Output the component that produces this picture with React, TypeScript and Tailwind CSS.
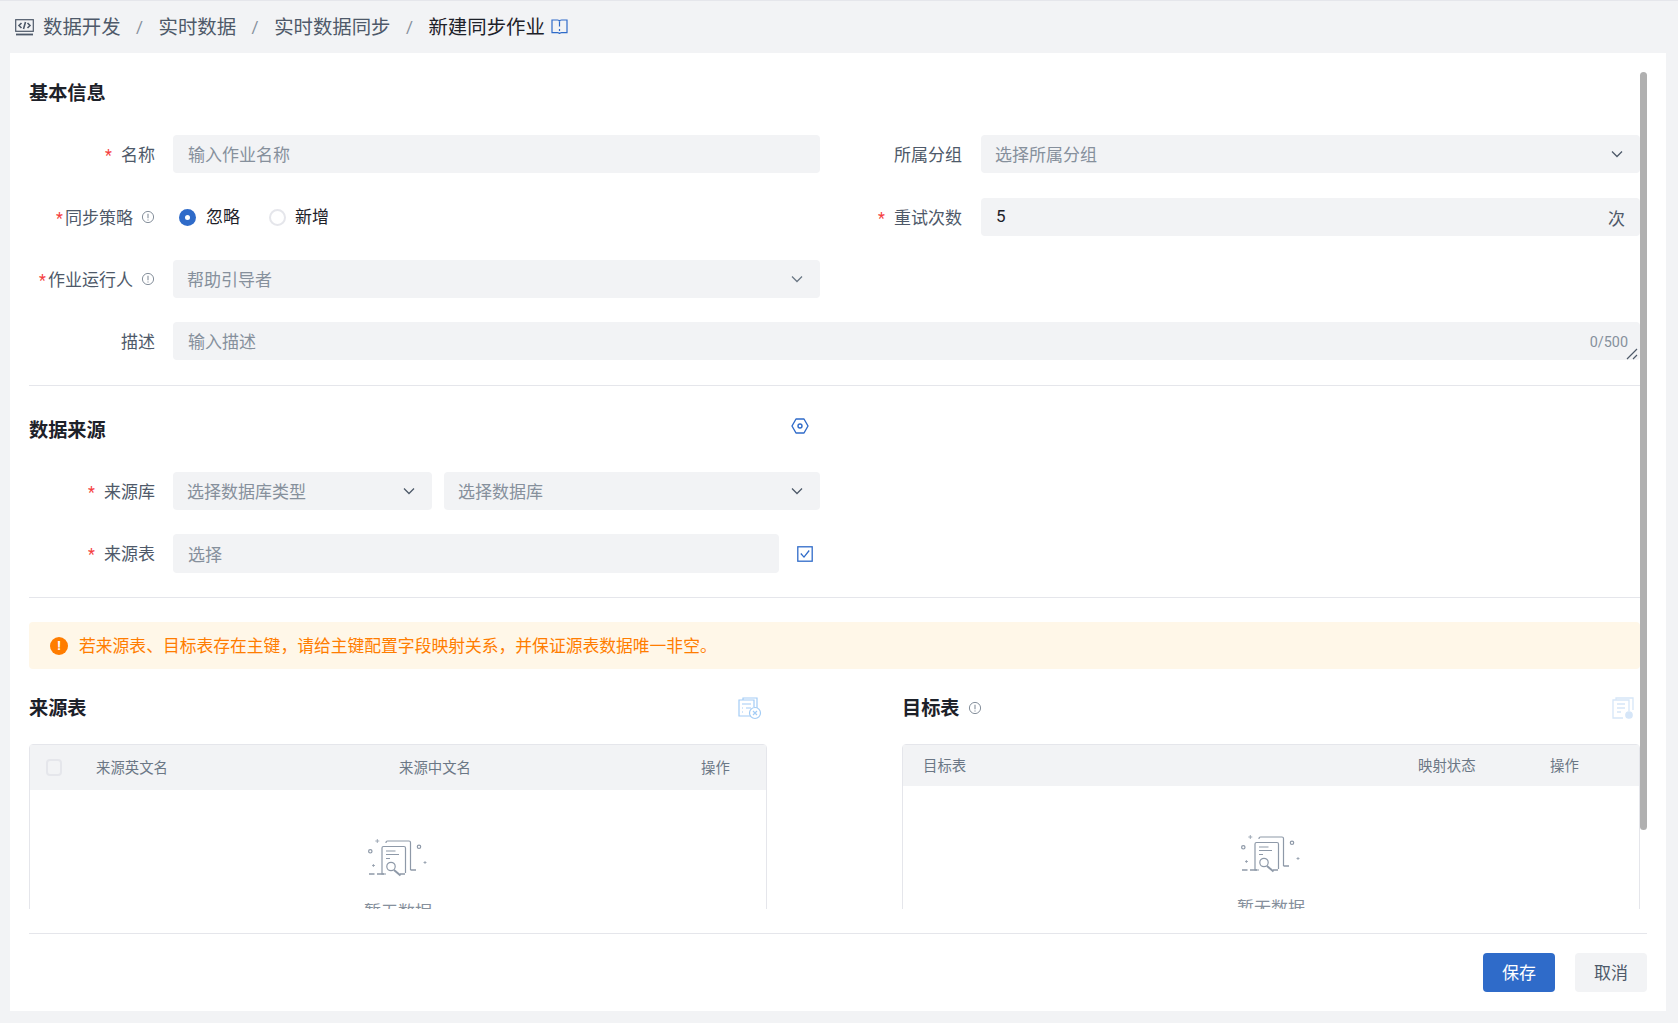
import React from "react";

type IconProps = { className?: string };

const InfoIcon = ({ className = "" }: IconProps) => (
  <svg viewBox="0 0 14 14" fill="none" stroke="currentColor" className={className}>
    <circle cx="7" cy="7" r="5.6" strokeWidth="1" />
    <path d="M7 3.8v4.4" strokeWidth="1.1" />
    <path d="M7 9.4v1" strokeWidth="1.1" />
  </svg>
);

const Chevron = ({ className = "" }: IconProps) => (
  <svg viewBox="0 0 12 8" fill="none" stroke="currentColor" strokeWidth="1.3" className={className}>
    <path d="M1 1.5l5 5 5-5" />
  </svg>
);

const MonitorIcon = () => (
  <svg viewBox="0 0 19 17" fill="none" className="w-[19px] h-[17px] text-[#4e5969]" stroke="currentColor">
    <rect x="0.7" y="0.7" width="17.6" height="11.6" strokeWidth="1.2" />
    <path d="M6.5 4L4 6.5 6.5 9M12.5 4L15 6.5 12.5 9M10.5 3L8.5 10" strokeWidth="1.6" />
    <path d="M1 15.5h17" strokeWidth="1.8" />
  </svg>
);

const BookIcon = () => (
  <svg viewBox="0 0 17 16" fill="none" stroke="#2f6bc9" strokeWidth="1.2" className="w-[17px] h-[16px]">
    <path d="M1 1h5.5c1 0 2 .4 2 1.4 0-1 1-1.4 2-1.4H16v12.6h-5.5c-1 0-2 .4-2 1.4 0-1-1-1.4-2-1.4H1z" />
    <path d="M8.5 2.4v5.2M8.5 10v2" />
  </svg>
);

const HexIcon = () => (
  <svg viewBox="0 0 18 18" fill="none" stroke="#2f6bc9" strokeWidth="1.4" className="w-[18px] h-[18px]">
    <path d="M5 2h8l4 7-4 7H5L1 9z" strokeLinejoin="round" />
    <circle cx="9" cy="9" r="2" />
  </svg>
);

const CheckIcon = () => (
  <svg viewBox="0 0 16 16" fill="none" stroke="#2f6bc9" strokeWidth="1.3" className="w-[16px] h-[16px]">
    <rect x="0.8" y="0.8" width="14.4" height="14.4" />
    <path d="M3.8 7.5l3.2 3.6 5.2-6.6" />
  </svg>
);

const RemoveFileIcon = () => (
  <svg viewBox="0 0 24 23" fill="none" stroke="#a3ccf5" strokeWidth="1.2" className="w-[24px] h-[23px] mt-[2px]">
    <path d="M5 3V1h14v10" />
    <path d="M13 19H1V3h15v7" />
    <path d="M4 7h9M4 11h1M8 11h5M4 15h1" />
    <circle cx="17" cy="16" r="5.5" />
    <path d="M15 14l4 4M19 14l-4 4" />
  </svg>
);

const AddFileIcon = () => (
  <svg viewBox="0 0 22 23" fill="none" stroke="#d6e6f8" strokeWidth="1.3" className="w-[22px] h-[23px] mt-[2px]">
    <path d="M4 3V1h17v12" />
    <path d="M11 21H1V3h16v11" />
    <path d="M5 7h8M5 11h8M5 15h4" />
    <circle cx="17" cy="18" r="3.2" fill="#d6e6f8" />
  </svg>
);

const EmptyImage = () => (
  <svg viewBox="28 28 60 40" fill="none" stroke="#8e99a8" strokeWidth="1.2" className="w-[60px] h-[40px]">
    <path d="M46 33v-.5a1.5 1.5 0 0 1 1.5-1.5H69a1.5 1.5 0 0 1 1.5 1.5V60" />
    <path d="M46 64H42V38a1.5 1.5 0 0 1 1.5-1.5H64a1.5 1.5 0 0 1 1.5 1.5v25" />
    <path d="M46 41h9.5M46 44.5h13M46 48.5h4" />
    <circle cx="51" cy="56.5" r="4.2" />
    <path d="M54 60l6.5 5.5" strokeWidth="2" />
    <path d="M29 64h5.5M37 64h7M60 64h5M70.5 60H76" strokeWidth="1.3" />
    <circle cx="30.3" cy="41.3" r="1.7" />
    <circle cx="79" cy="36.8" r="1.7" />
    <path d="M37.3 29v4M35.3 31h4M33.4 54v3M32 55.5h3M85 51v3M83.5 52.5h3" strokeWidth=".8" />
  </svg>
);

const Field = ({
  label,
  required,
  info,
  children,
  wide,
  className = "",
}: {
  label: string;
  required?: boolean;
  info?: boolean;
  children: React.ReactNode;
  wide?: boolean;
  className?: string;
}) => (
  <div className={`flex items-center ${className}`}>
    <div
      className={`flex items-center justify-end shrink-0 text-[17px] text-[#4e5969] ${
        wide ? "w-[142px] mr-[19px]" : "w-[126px] mr-[18px]"
      }`}
    >
      {required && <span className={`text-[#f53f3f] text-[16px] pt-[3px] ${info ? "mr-[2px]" : "mr-[9px]"}`}>*</span>}
      <span className="pt-[3px]">{label}</span>
      {info && <InfoIcon className="w-[14px] h-[14px] ml-[8px] text-[#86909c]" />}
    </div>
    <div className="flex-1 min-w-0">{children}</div>
  </div>
);

const TextBox = ({ placeholder, tall }: { placeholder: string; tall?: boolean }) => (
  <input
    placeholder={placeholder}
    className={`w-full rounded bg-[#f2f3f5] px-[15px] pt-[2px] text-[17px] text-[#1d2129] outline-none placeholder:text-[#86909c] ${
      tall ? "h-[39px]" : "h-[38px]"
    }`}
  />
);

const SelectBox = ({ text, dark }: { text: string; dark?: boolean }) => (
  <div className="flex items-center justify-between h-[38px] rounded bg-[#f2f3f5] pl-[14px] pr-[17px]">
    <span className="pt-[3px] text-[17px] text-[#86909c]">{text}</span>
    <Chevron className={`w-[12px] h-[8px] ${dark ? "text-[#4e5969]" : "text-[#6b7785]"}`} />
  </div>
);

const SectionTitle = ({ children }: { children: React.ReactNode }) => (
  <h2 className="h-[26px] text-[19.2px] leading-[30px] font-bold text-[#1d2129]">{children}</h2>
);

const Crumb = ({ text, current }: { text: string; current?: boolean }) => (
  <span className={`pt-[2px] text-[19.4px] ${current ? "text-[#1d2129]" : "text-[#4e5969]"}`}>{text}</span>
);

const Sep = () => <span className="pt-[2px] text-[17px] text-[#86909c] w-[38px] text-center">/</span>;

const Empty = () => (
  <div className="flex flex-col items-center mt-[48px]">
    <EmptyImage />
    <div className="mt-[22px] text-[17px] leading-[24px] text-[#86909c]">暂无数据</div>
  </div>
);

const App = () => {
  return (
    <div className="w-[1678px] h-[1023px] overflow-hidden bg-[#f2f3f5] border-t border-[#e5e6eb] font-['Roboto','Noto_Sans_CJK_SC',sans-serif]">
      {/* 面包屑 */}
      <div className="flex items-center h-[52px] pl-[15px]">
        <MonitorIcon />
        <span className="w-[9px]" />
        <Crumb text="数据开发" />
        <Sep />
        <Crumb text="实时数据" />
        <Sep />
        <Crumb text="实时数据同步" />
        <Sep />
        <Crumb text="新建同步作业" current />
        <span className="ml-[6px]">
          <BookIcon />
        </span>
      </div>

      <div className="relative ml-[10px] w-[1656px] h-[958px] bg-white">
        {/* 滚动条 */}
        <div className="absolute left-[1630px] top-[19px] w-[7px] h-[758px] rounded-full bg-[#b0b0b0] z-10" />

        <div className="h-[856px] overflow-hidden pl-[19px] pr-[26px] pt-[26px]">
          {/* 基本信息 */}
          <SectionTitle>基本信息</SectionTitle>
          <div className="grid grid-cols-[791px_820px] mt-[30px]">
            <Field label="名称" required>
              <TextBox placeholder="输入作业名称" />
            </Field>
            <Field label="所属分组" wide>
              <SelectBox text="选择所属分组" dark />
            </Field>
          </div>
          <div className="grid grid-cols-[791px_820px] mt-[25px]">
            <Field label="同步策略" required info>
              <div className="flex items-center h-[38px] pl-[6px] text-[17px] text-[#1d2129]">
                <span className="flex items-center justify-center w-[17px] h-[17px] rounded-full bg-[#2f6bc9]">
                  <span className="w-[5px] h-[5px] rounded-full bg-white" />
                </span>
                <span className="ml-[10px] pt-[2px]">忽略</span>
                <span className="ml-[29px] w-[17px] h-[17px] rounded-full border-2 border-[#e5e6eb]" />
                <span className="ml-[9px] pt-[2px]">新增</span>
              </div>
            </Field>
            <Field label="重试次数" required wide>
              <div className="flex items-center justify-between h-[38px] rounded bg-[#f2f3f5] pl-[15px] pr-[15px] text-[17px]">
                <span className="text-[#1d2129]">5</span>
                <span className="pt-[5px] text-[#4e5969]">次</span>
              </div>
            </Field>
          </div>
          <div className="w-[791px] mt-[24px]">
            <Field label="作业运行人" required info>
              <SelectBox text="帮助引导者" />
            </Field>
          </div>
          <Field label="描述" className="mt-[24px]">
            <div className="relative">
              <TextBox placeholder="输入描述" />
              <span className="absolute right-[12px] top-[11px] text-[14.4px] leading-[20px] text-[#86909c]">0/500</span>
              <svg viewBox="0 0 12 12" stroke="#4e5969" strokeWidth="1.2" className="absolute right-[2px] bottom-0 w-[12px] h-[12px]">
                <path d="M1 11L11 1M7 11l4-4" />
              </svg>
            </div>
          </Field>

          <div className="h-px bg-[#e5e6eb] mt-[25px]" />

          {/* 数据来源 */}
          <div className="flex items-start justify-between w-[791px] mt-[30px]">
            <SectionTitle>数据来源</SectionTitle>
            <span className="mt-[1px] mr-[11px]">
              <HexIcon />
            </span>
          </div>
          <div className="w-[791px] mt-[30px]">
            <Field label="来源库" required>
              <div className="grid grid-cols-[259px_1fr] gap-[12px]">
                <SelectBox text="选择数据库类型" dark />
                <SelectBox text="选择数据库" dark />
              </div>
            </Field>
          </div>
          <div className="w-[791px] mt-[24px]">
            <Field label="来源表" required>
              <div className="flex items-center gap-[18px] pr-[7px]">
                <TextBox placeholder="选择" tall />
                <span className="shrink-0 pt-[1px]">
                  <CheckIcon />
                </span>
              </div>
            </Field>
          </div>

          <div className="h-px bg-[#e5e6eb] mt-[24px]" />

          {/* 提示 */}
          <div className="flex items-center h-[47px] mt-[24px] pl-[21px] rounded bg-[#fff7e8] text-[16.8px] text-[#ff7d00]">
            <span className="flex items-center justify-center w-[18px] h-[18px] rounded-full bg-[#ff7d00] text-[13px] font-bold text-white">!</span>
            <span className="ml-[11px] pt-[3px]">若来源表、目标表存在主键，请给主键配置字段映射关系，并保证源表数据唯一非空。</span>
          </div>

          {/* 字段映射 */}
          <div className="grid grid-cols-[738px_738px] gap-x-[135px] mt-[25px]">
            <div>
              <div className="flex items-center justify-between pr-[5px]">
                <SectionTitle>来源表</SectionTitle>
                <RemoveFileIcon />
              </div>
              <div className="mt-[24px] h-[300px] rounded-t border border-[#e5e6eb]">
                <div className="grid grid-cols-[66px_303px_302px_1fr] items-center h-[45px] bg-[#f2f3f5] text-[14.4px] text-[#6b7785]">
                  <span className="ml-[16px] w-[16px] h-[17px] rounded border-2 border-[#e5e6eb]" />
                  <span className="pt-[2px]">来源英文名</span>
                  <span className="pt-[2px]">来源中文名</span>
                  <span className="pt-[2px]">操作</span>
                </div>
                <Empty />
              </div>
            </div>
            <div>
              <div className="flex items-center justify-between pr-[6px]">
                <div className="flex items-center">
                  <SectionTitle>目标表</SectionTitle>
                  <InfoIcon className="w-[14px] h-[14px] ml-[8px] mt-[2px] text-[#86909c]" />
                </div>
                <AddFileIcon />
              </div>
              <div className="mt-[24px] h-[300px] rounded-t border border-[#e5e6eb]">
                <div className="grid grid-cols-[1fr_132px_89px] items-center h-[41px] pl-[20px] bg-[#f2f3f5] text-[14.4px] text-[#6b7785]">
                  <span className="pt-[2px]">目标表</span>
                  <span className="pt-[2px]">映射状态</span>
                  <span className="pt-[2px]">操作</span>
                </div>
                <Empty />
              </div>
            </div>
          </div>
        </div>

        {/* 底部按钮 */}
        <div className="mx-[19px] mt-[24px] border-t border-[#e5e6eb]">
          <div className="flex justify-end gap-[20px] mt-[19px]">
            <button className="w-[72px] h-[39px] rounded bg-[#2f6bc9] pt-[2px] text-[17px] text-white">保存</button>
            <button className="w-[72px] h-[39px] rounded bg-[#f2f3f5] pt-[2px] text-[17px] text-[#4e5969]">取消</button>
          </div>
        </div>
      </div>
    </div>
  );
};

export default App;
